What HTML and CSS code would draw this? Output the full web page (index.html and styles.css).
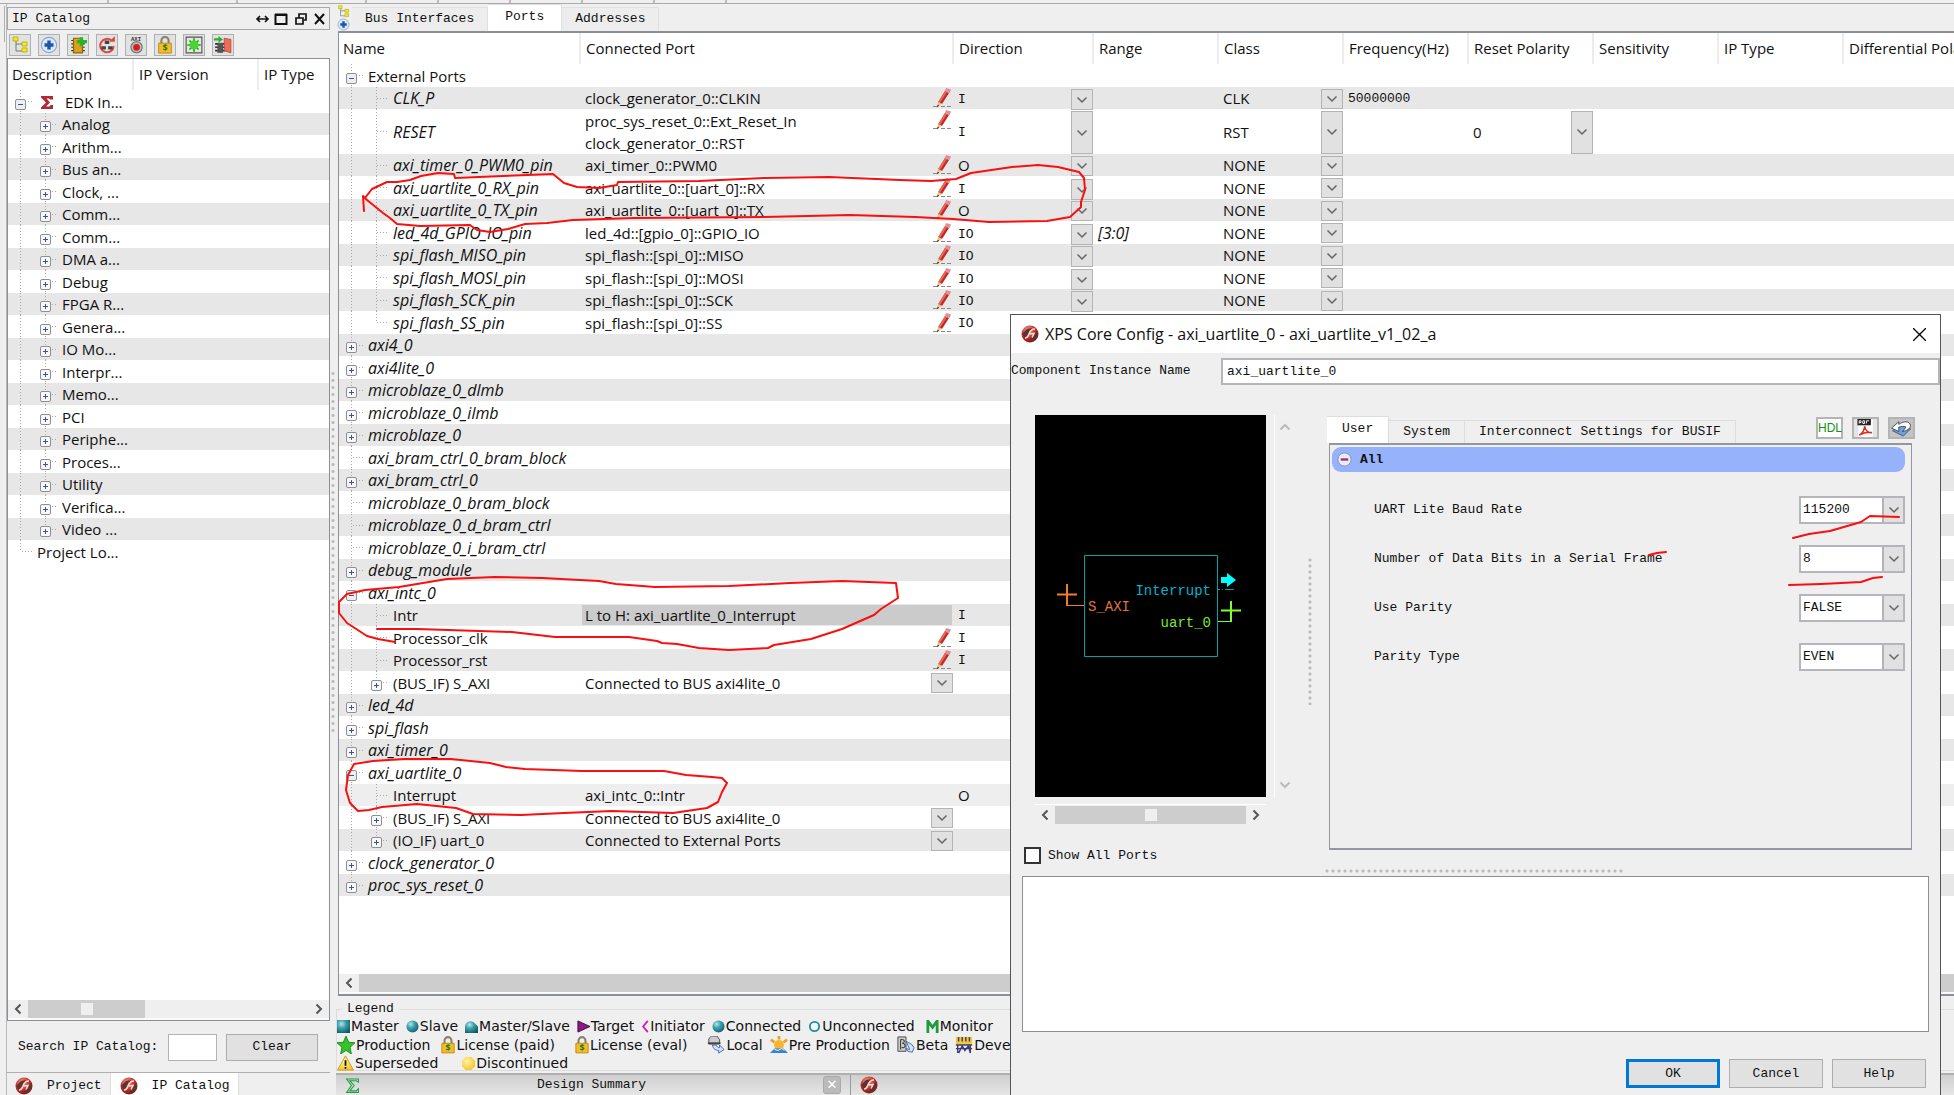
FILE: index.html
```html
<!DOCTYPE html>
<html lang="en">
<head>
<meta charset="utf-8">
<title>XPS - Ports</title>
<link rel="stylesheet" href="styles.css">
</head>
<body>
<svg class="defs" aria-hidden="true">
  <defs>
    <radialGradient id="teal" cx=".35" cy=".3" r=".8"><stop offset="0" stop-color="#b9e6ea"/><stop offset=".4" stop-color="#3fa3ad"/><stop offset="1" stop-color="#0c5963"/></radialGradient>
    <radialGradient id="red" cx=".4" cy=".3" r=".8"><stop offset="0" stop-color="#f7a090"/><stop offset=".5" stop-color="#c93028"/><stop offset="1" stop-color="#5d1512"/></radialGradient>
    <radialGradient id="yel" cx=".4" cy=".35" r=".8"><stop offset="0" stop-color="#fff3a0"/><stop offset="1" stop-color="#f3bd1c"/></radialGradient>
    <symbol id="pencil" viewBox="0 0 18 20"><path d="M0 18.500h5M8 18.500h4M14 18.500h4" stroke="#888" stroke-width="1"/><path d="M12 3l4 2-7 11-4-1.500z" fill="#c3282a"/><path d="M12 3l2 1-7 11-2-.7z" fill="#e36a55"/><path d="M13 0l5 1.500L16.500 5 12 3z" fill="#e58b96"/><path d="M5 14l4 1.800L4 19z" fill="#efc07a"/><path d="M4.800 16.800l1.400 1L3.800 19.300z" fill="#222"/></symbol>
    <symbol id="swirl" viewBox="0 0 18 18"><circle cx="9" cy="9" r="8.500" fill="url(#red)"/><path d="M1 9l5-5 5-1-3 5-4 5zM9 16l2-6 5-4 1 3-3 5z" fill="#5a3532"/><path d="M4 13c2 0 3-1 4-4s3-5 6-5M9 9l4-.500-2 4" stroke="#ffd9d2" stroke-width="1.600" fill="none"/></symbol>
    <symbol id="tree" viewBox="0 0 16 18"><path d="M4 4v11h6M4 8h7" stroke="#777" fill="none"/><path d="M1 1h5v4H1zM10 6h5v4h-5zM10 12h5v4h-5z" fill="#f2ec1c" stroke="#b5a900" stroke-width=".8"/></symbol>
    <symbol id="add" viewBox="0 0 16 16"><circle cx="8" cy="8" r="6.800" fill="#dbe9fa" stroke="#8aa6cc"/><path d="M8 4v8M4 8h8" stroke="#1d55ad" stroke-width="3"/></symbol>
    <symbol id="lock" viewBox="0 0 16 20"><path d="M4 9V5a4 4 0 0 1 8 0v3" fill="none" stroke="#8a8270" stroke-width="2.400"/><path d="M1 8h14v11H1z" fill="#f4bd26" stroke="#b98411"/><text x="8" y="17" class="lock-s">$</text></symbol>
  </defs>
</svg>

<div class="top-strip"><span></span><span></span><span></span><span></span><span></span><span></span><span></span><span></span></div>
<div class="workspace">
  <div class="left-edge"></div>
  <aside class="catalog">
    <header class="dock-title">
      <h2>IP Catalog</h2>
      <svg width="72" height="16" viewBox="0 0 72 16" fill="none" stroke="#111" stroke-width="2"><path d="M3 8h9M5 5L2 8l3 3M10 5l3 3-3 3" stroke-width="1.600"/><path d="M20.500 4h11v9h-11zM20 3.500h12"/><path d="M44 7V3h7v6h-2M41 7h7v6h-7z" stroke-width="1.700"/><path d="M60 3l9 10M69 3l-9 10"/></svg>
    </header>
    <div class="tools">
      <button aria-label="Tree"><svg><use href="#tree"/></svg></button>
      <button aria-label="Add"><svg><use href="#add"/></svg></button>
      <button aria-label="Add chip"><svg viewBox="0 0 16 16"><path d="M2 4h12M2 7h12M2 10h12M2 13h12" stroke="#333"/><path d="M4 2h8v13H4z" fill="#d9a21b" stroke="#8c6300"/><path d="M11 1v8M7 5h9" stroke="#28b32d" stroke-width="3"/></svg></button>
      <button aria-label="Refresh"><svg viewBox="0 0 16 16"><path d="M14 9a6 6 0 1 1-2-5" fill="none" stroke="#de4840" stroke-width="1.800"/><path d="M10 5h5V0z" fill="#de4840"/><path d="M6 4h4v3H6zM3 9h4v3H3zM9 9h4v3H9z" fill="#444"/></svg></button>
      <button aria-label="Record AXI"><svg viewBox="0 0 16 16"><text x="8" y="4" class="axi">AXI</text><circle cx="8.500" cy="10" r="5" fill="#bbb" stroke="#777"/><circle cx="8.500" cy="10" r="3" fill="#d81c1c"/></svg></button>
      <button aria-label="License"><svg><use href="#lock"/></svg></button>
      <button aria-label="Chip"><svg viewBox="0 0 16 16"><path d="M1 1h14v14H1z" fill="#dce9dc" stroke="#555"/><path d="M8 2v12M2 8h12M4 4l8 8M12 4l-8 8" stroke="#2c9b20" stroke-width="1.500"/><circle cx="8" cy="8" r="4" fill="#48d52f"/></svg></button>
      <button aria-label="Export"><svg viewBox="0 0 16 16"><path d="M1 7h9M1 10h9M1 13h9" stroke="#333" stroke-width="1.500"/><path d="M3 6h5v9H3z" fill="#555"/><path d="M9 2l6 1v12l-6-2z" fill="#ee6a5a" stroke="#b93024" stroke-width=".6"/><path d="M0 2h4V0l4 3-4 3V4H0z" fill="#28b032"/></svg></button>
    </div>
    <div class="tree-frame">
      <table class="grid tree">
        <colgroup><col class="c-desc"><col class="c-ver"><col></colgroup>
        <thead><tr><th>Description</th><th>IP Version</th><th>IP Type</th></tr></thead>
        <tbody>
          <tr><td class="n1"><button class="tg minus" aria-label="Collapse"></button><svg class="sig" viewBox="0 0 13 13"><path d="M0 0h12v3.500H9L8 2.500H5.500L9 6.500 5 10.500h3.500l1-1.500H12v4H0v-1.500L5 6.500 0 1.500z" fill="#b02a35"/></svg>EDK In...</td><td></td><td></td></tr>
          <tr><td class="n2"><button class="tg" aria-label="Expand"></button>Analog</td><td></td><td></td></tr>
          <tr><td class="n2"><button class="tg" aria-label="Expand"></button>Arithm...</td><td></td><td></td></tr>
          <tr><td class="n2"><button class="tg" aria-label="Expand"></button>Bus an...</td><td></td><td></td></tr>
          <tr><td class="n2"><button class="tg" aria-label="Expand"></button>Clock, ...</td><td></td><td></td></tr>
          <tr><td class="n2"><button class="tg" aria-label="Expand"></button>Comm...</td><td></td><td></td></tr>
          <tr><td class="n2"><button class="tg" aria-label="Expand"></button>Comm...</td><td></td><td></td></tr>
          <tr><td class="n2"><button class="tg" aria-label="Expand"></button>DMA a...</td><td></td><td></td></tr>
          <tr><td class="n2"><button class="tg" aria-label="Expand"></button>Debug</td><td></td><td></td></tr>
          <tr><td class="n2"><button class="tg" aria-label="Expand"></button>FPGA R...</td><td></td><td></td></tr>
          <tr><td class="n2"><button class="tg" aria-label="Expand"></button>Genera...</td><td></td><td></td></tr>
          <tr><td class="n2"><button class="tg" aria-label="Expand"></button>IO Mo...</td><td></td><td></td></tr>
          <tr><td class="n2"><button class="tg" aria-label="Expand"></button>Interpr...</td><td></td><td></td></tr>
          <tr><td class="n2"><button class="tg" aria-label="Expand"></button>Memo...</td><td></td><td></td></tr>
          <tr><td class="n2"><button class="tg" aria-label="Expand"></button>PCI</td><td></td><td></td></tr>
          <tr><td class="n2"><button class="tg" aria-label="Expand"></button>Periphe...</td><td></td><td></td></tr>
          <tr><td class="n2"><button class="tg" aria-label="Expand"></button>Proces...</td><td></td><td></td></tr>
          <tr><td class="n2"><button class="tg" aria-label="Expand"></button>Utility</td><td></td><td></td></tr>
          <tr><td class="n2"><button class="tg" aria-label="Expand"></button>Verifica...</td><td></td><td></td></tr>
          <tr><td class="n2 last"><button class="tg" aria-label="Expand"></button>Video ...</td><td></td><td></td></tr>
          <tr><td class="n1 leaf last">Project Lo...</td><td></td><td></td></tr>
        </tbody>
      </table>
      <div class="hbar"><svg class="arr" viewBox="0 0 8 12"><path d="M6.500 1.500L2 6l4.500 4.500"/></svg><div class="thumb short"><i></i></div><svg class="arr end" viewBox="0 0 8 12"><path d="M1.500 1.500L6 6l-4.500 4.500"/></svg></div>
    </div>
    <form class="search"><label for="q">Search IP Catalog:</label><input id="q" type="text"><button type="button">Clear</button></form>
    <nav class="dock-tabs"><button><svg><use href="#swirl"/></svg>Project</button><button class="on"><svg><use href="#swirl"/></svg>IP Catalog</button></nav>
  </aside>
  <div class="split-v"></div>
  <main class="ports">
    <nav class="tabs"><span class="tab-icons"><svg><use href="#tree"/></svg><svg><use href="#add"/></svg></span><button>Bus Interfaces</button><button class="on">Ports</button><button>Addresses</button></nav>
    <div class="ports-frame">
      <table class="grid">
        <colgroup><col class="c-name"><col class="c-port"><col class="c-dir"><col class="c-std"><col class="c-std"><col class="c-std"><col class="c-std"><col class="c-std"><col class="c-std"><col></colgroup>
        <thead><tr><th>Name</th><th>Connected Port</th><th>Direction</th><th>Range</th><th>Class</th><th>Frequency(Hz)</th><th>Reset Polarity</th><th>Sensitivity</th><th>IP Type</th><th>Differential Polarity</th></tr></thead>
        <tbody>
          <tr><td class="n1"><button class="tg minus" aria-label="Collapse"></button>External Ports</td><td colspan="9"></td></tr>
          <tr><td class="n2 leaf em">CLK_P</td><td><div class="pc">clock_generator_0::CLKIN<svg><use href="#pencil"/></svg></div></td><td class="mono"><div class="combo"><select aria-label="Direction"><option>I</option></select></div></td><td></td><td><div class="combo"><select aria-label="Class"><option>CLK</option></select></div></td><td class="mono">50000000</td><td colspan="4"></td></tr>
          <tr class="tall"><td class="n2 leaf em">RESET</td><td><div class="pc">proc_sys_reset_0::Ext_Reset_In<br>clock_generator_0::RST<svg><use href="#pencil"/></svg></div></td><td class="mono"><div class="combo"><select aria-label="Direction"><option>I</option></select></div></td><td></td><td><div class="combo"><select aria-label="Class"><option>RST</option></select></div></td><td></td><td><div class="combo"><select aria-label="Reset polarity"><option>0</option></select></div></td><td colspan="3"></td></tr>
          <tr><td class="n2 leaf em">axi_timer_0_PWM0_pin</td><td><div class="pc">axi_timer_0::PWM0<svg><use href="#pencil"/></svg></div></td><td><div class="combo"><select aria-label="Direction"><option>O</option></select></div></td><td></td><td><div class="combo"><select aria-label="Class"><option>NONE</option></select></div></td><td colspan="5"></td></tr>
          <tr><td class="n2 leaf em">axi_uartlite_0_RX_pin</td><td><div class="pc">axi_uartlite_0::[uart_0]::RX<svg><use href="#pencil"/></svg></div></td><td class="mono"><div class="combo"><select aria-label="Direction"><option>I</option></select></div></td><td></td><td><div class="combo"><select aria-label="Class"><option>NONE</option></select></div></td><td colspan="5"></td></tr>
          <tr><td class="n2 leaf em">axi_uartlite_0_TX_pin</td><td><div class="pc">axi_uartlite_0::[uart_0]::TX<svg><use href="#pencil"/></svg></div></td><td><div class="combo"><select aria-label="Direction"><option>O</option></select></div></td><td></td><td><div class="combo"><select aria-label="Class"><option>NONE</option></select></div></td><td colspan="5"></td></tr>
          <tr><td class="n2 leaf em">led_4d_GPIO_IO_pin</td><td><div class="pc">led_4d::[gpio_0]::GPIO_IO<svg><use href="#pencil"/></svg></div></td><td class="mono"><div class="combo"><select aria-label="Direction"><option>IO</option></select></div></td><td class="em">[3:0]</td><td><div class="combo"><select aria-label="Class"><option>NONE</option></select></div></td><td colspan="5"></td></tr>
          <tr><td class="n2 leaf em">spi_flash_MISO_pin</td><td><div class="pc">spi_flash::[spi_0]::MISO<svg><use href="#pencil"/></svg></div></td><td class="mono"><div class="combo"><select aria-label="Direction"><option>IO</option></select></div></td><td></td><td><div class="combo"><select aria-label="Class"><option>NONE</option></select></div></td><td colspan="5"></td></tr>
          <tr><td class="n2 leaf em">spi_flash_MOSI_pin</td><td><div class="pc">spi_flash::[spi_0]::MOSI<svg><use href="#pencil"/></svg></div></td><td class="mono"><div class="combo"><select aria-label="Direction"><option>IO</option></select></div></td><td></td><td><div class="combo"><select aria-label="Class"><option>NONE</option></select></div></td><td colspan="5"></td></tr>
          <tr><td class="n2 leaf em">spi_flash_SCK_pin</td><td><div class="pc">spi_flash::[spi_0]::SCK<svg><use href="#pencil"/></svg></div></td><td class="mono"><div class="combo"><select aria-label="Direction"><option>IO</option></select></div></td><td></td><td><div class="combo"><select aria-label="Class"><option>NONE</option></select></div></td><td colspan="5"></td></tr>
          <tr><td class="n2 leaf last em">spi_flash_SS_pin</td><td><div class="pc">spi_flash::[spi_0]::SS<svg><use href="#pencil"/></svg></div></td><td class="mono">IO</td><td colspan="7"></td></tr>
          <tr><td class="n1 em"><button class="tg" aria-label="Expand"></button>axi4_0</td><td colspan="9"></td></tr>
          <tr><td class="n1 em"><button class="tg" aria-label="Expand"></button>axi4lite_0</td><td colspan="9"></td></tr>
          <tr><td class="n1 em"><button class="tg" aria-label="Expand"></button>microblaze_0_dlmb</td><td colspan="9"></td></tr>
          <tr><td class="n1 em"><button class="tg" aria-label="Expand"></button>microblaze_0_ilmb</td><td colspan="9"></td></tr>
          <tr><td class="n1 em"><button class="tg" aria-label="Expand"></button>microblaze_0</td><td colspan="9"></td></tr>
          <tr><td class="n1 leaf em">axi_bram_ctrl_0_bram_block</td><td colspan="9"></td></tr>
          <tr><td class="n1 em"><button class="tg" aria-label="Expand"></button>axi_bram_ctrl_0</td><td colspan="9"></td></tr>
          <tr><td class="n1 leaf em">microblaze_0_bram_block</td><td colspan="9"></td></tr>
          <tr><td class="n1 leaf em">microblaze_0_d_bram_ctrl</td><td colspan="9"></td></tr>
          <tr><td class="n1 leaf em">microblaze_0_i_bram_ctrl</td><td colspan="9"></td></tr>
          <tr><td class="n1 em"><button class="tg" aria-label="Expand"></button>debug_module</td><td colspan="9"></td></tr>
          <tr><td class="n1 em"><button class="tg minus" aria-label="Collapse"></button>axi_intc_0</td><td colspan="9"></td></tr>
          <tr><td class="n2 leaf">Intr</td><td class="picked">L to H: axi_uartlite_0_Interrupt</td><td class="mono">I</td><td colspan="7"></td></tr>
          <tr><td class="n2 leaf">Processor_clk</td><td><div class="pc"><svg><use href="#pencil"/></svg></div></td><td class="mono">I</td><td colspan="7"></td></tr>
          <tr><td class="n2 leaf">Processor_rst</td><td><div class="pc"><svg><use href="#pencil"/></svg></div></td><td class="mono">I</td><td colspan="7"></td></tr>
          <tr><td class="n2 last"><button class="tg" aria-label="Expand"></button>(BUS_IF) S_AXI</td><td><div class="combo"><select aria-label="Bus"><option>Connected to BUS axi4lite_0</option></select></div></td><td colspan="8"></td></tr>
          <tr><td class="n1 em"><button class="tg" aria-label="Expand"></button>led_4d</td><td colspan="9"></td></tr>
          <tr><td class="n1 em"><button class="tg" aria-label="Expand"></button>spi_flash</td><td colspan="9"></td></tr>
          <tr><td class="n1 em"><button class="tg" aria-label="Expand"></button>axi_timer_0</td><td colspan="9"></td></tr>
          <tr><td class="n1 em"><button class="tg minus" aria-label="Collapse"></button>axi_uartlite_0</td><td colspan="9"></td></tr>
          <tr class="hover"><td class="n2 leaf">Interrupt</td><td>axi_intc_0::Intr</td><td>O</td><td colspan="7"></td></tr>
          <tr><td class="n2"><button class="tg" aria-label="Expand"></button>(BUS_IF) S_AXI</td><td><div class="combo"><select aria-label="Bus"><option>Connected to BUS axi4lite_0</option></select></div></td><td colspan="8"></td></tr>
          <tr><td class="n2 last"><button class="tg" aria-label="Expand"></button>(IO_IF) uart_0</td><td><div class="combo"><select aria-label="IO"><option>Connected to External Ports</option></select></div></td><td colspan="8"></td></tr>
          <tr><td class="n1 em"><button class="tg" aria-label="Expand"></button>clock_generator_0</td><td colspan="9"></td></tr>
          <tr><td class="n1 last em"><button class="tg" aria-label="Expand"></button>proc_sys_reset_0</td><td colspan="9"></td></tr>
        </tbody>
      </table>
      <div class="hbar"><svg class="arr" viewBox="0 0 8 12"><path d="M6.500 1.500L2 6l4.500 4.500"/></svg><div class="thumb"></div></div>
    </div>
    <fieldset class="legend">
      <legend>Legend</legend>
      <div class="lrow">
        <span><svg viewBox="0 0 14 14"><path d="M0 0h14v14H0z" fill="url(#teal)"/></svg>Master</span>
        <span><svg viewBox="0 0 14 14"><circle cx="7" cy="7" r="6.500" fill="url(#teal)"/></svg>Slave</span>
        <span><svg viewBox="0 0 14 14"><path d="M0 14V7a6 6 0 0 1 11-3l3 3v7z" fill="url(#teal)"/></svg>Master/Slave</span>
        <span><svg viewBox="0 0 14 14"><path d="M1 1l13 6-13 6z" fill="#8b1a86" stroke="#3d0d3b"/></svg>Target</span>
        <span><svg class="thin" viewBox="0 0 8 14"><path d="M7 1L2 7l5 6" fill="none" stroke="#c426b2" stroke-width="2"/></svg>Initiator</span>
        <span><svg viewBox="0 0 14 14"><circle cx="7" cy="7" r="6.500" fill="url(#teal)"/></svg>Connected</span>
        <span><svg viewBox="0 0 14 14"><circle cx="7" cy="7" r="5" fill="#eff" stroke="#2b8c96" stroke-width="2"/></svg>Unconnected</span>
        <span class="mon"><svg viewBox="0 0 14 14"><path d="M2 14V1l5 7 5-7v13" fill="none" stroke="#1f9a3c" stroke-width="3"/></svg>Monitor</span>
      </div>
      <div class="lrow wide">
        <span><svg viewBox="0 0 20 20"><path d="M10 0l3 7 7 .5-5.500 5L16 20l-6-4-6 4 1.500-7.500L0 7.500 7 7z" fill="#35c32b" stroke="#178a14"/></svg>Production</span>
        <span class="paid"><svg class="lk"><use href="#lock"/></svg>License (paid)</span>
        <span class="eval"><svg class="lk"><use href="#lock"/></svg>License (eval)</span>
        <span class="local"><svg viewBox="0 0 20 20"><path d="M2 8V3l3-3h6l3 4v5H2z" fill="#ccc" stroke="#444"/><path d="M1 8h14" stroke="#444" stroke-width="2"/><path d="M6 10c1 5 4 6 7 6v3l6-4-5-5v3c-2 0-3-1-4-3z" fill="#d2e4fb" stroke="#3a62a8"/></svg>Local</span>
        <span><svg viewBox="0 0 20 20"><path d="M10 0v4M1 4l4 3M19 4l-4 3" stroke="#f0a020" stroke-width="3"/><circle cx="10" cy="10" r="5.500" fill="#f5b52e"/><path d="M0 19l5-5h10l5 5z" fill="#3784d6"/><path d="M5 15l4 1 4-2 3 2" stroke="#fff" fill="none"/></svg>Pre Production</span>
        <span><svg viewBox="0 0 20 20"><path d="M1 1h9v16H1z" fill="#ccc" stroke="#444"/><path d="M4 15V4h2q3 0 2 3-1 1-2 1 3 0 3 3t-4 2" stroke="#222" fill="none"/><path d="M10 6l6 3 3 4-2 5-5-1-2-3 4 1-2-5z" fill="#d2e4fb" stroke="#3a62a8"/></svg>Beta</span>
        <span><svg viewBox="0 0 20 20"><path d="M1 1h18v9H1z" fill="#f1c93b"/><path d="M4 1v5M8 1v5M12 1v5M16 1v5M1 10h18M3 10v9M17 10v9M1 14h18M4 19l4-8 3 5 4-5 2 8" stroke="#3c3c78" stroke-width="1.600" fill="none"/></svg>Development</span>
      </div>
      <div class="lrow">
        <span class="sup"><svg viewBox="0 0 18 18"><path d="M9 1l9 16H0z" fill="url(#yel)" stroke="#c79a12"/><path d="M9 6v6M9 13.500v2" stroke="#111" stroke-width="2"/></svg>Superseded</span>
        <span class="disc"><svg viewBox="0 0 14 14"><path d="M4 0h6l4 4v6l-4 4H4l-4-4V4z" fill="url(#yel)"/></svg>Discontinued</span>
      </div>
    </fieldset>
    <nav class="doc-tabs">
      <div class="doc"><svg class="sum" viewBox="0 0 13 14"><path d="M1 1h11v3L10 2.500H4L8 7l-4 5h6l2-2v3.500H1L5.500 7z" fill="#bfe8c8" stroke="#249a45"/></svg><button>Design Summary</button><button class="x" aria-label="Close tab">✕</button></div>
      <div class="doc rest"><svg class="sw"><use href="#swirl"/></svg></div>
    </nav>
  </main>
</div>

<section class="dialog" role="dialog" aria-label="XPS Core Config">
  <header><svg class="sw"><use href="#swirl"/></svg><h1>XPS Core Config - axi_uartlite_0 - axi_uartlite_v1_02_a</h1><button aria-label="Close"><svg viewBox="0 0 12 12"><path d="M0 0l12 12M12 0L0 12" stroke="#000" stroke-width="1.200"/></svg></button></header>
  <div class="inst"><label for="inst">Component Instance Name</label><input id="inst" type="text" value="axi_uartlite_0"></div>
  <div class="cfg">
    <div class="preview">
      <div class="view">
        <svg class="block" viewBox="0 0 231 382">
          <path d="M49.500 140.500h133v101h-133z" fill="none" stroke="#00a3a8"/>
          <path d="M22 179.500h20M32 169v21" fill="none" stroke="#f47a2c" stroke-width="2"/>
          <path d="M31 190.500h18" stroke="#f47a2c"/>
          <text x="53" y="196" fill="#e0743a">S_AXI</text>
          <text x="176" y="180" fill="#00b4d0" text-anchor="end">Interrupt</text>
          <text x="176" y="212" fill="#7de82c" text-anchor="end">uart_0</text>
          <path d="M186 162h6v-4l9 7-9 7v-4h-6z" fill="#0ff"/>
          <path d="M183 174.500h16" stroke="#00a3a8" stroke-dasharray="2 2 1 2 9"/>
          <path d="M186 195.500h20M196 186v21" fill="none" stroke="#7dff2c" stroke-width="2"/>
          <path d="M183 206.500h14" stroke="#7dff2c"/>
        </svg>
        <div class="vbar"><svg viewBox="0 0 12 8"><path d="M1.500 6.500L6 2l4.500 4.500"/></svg><svg viewBox="0 0 12 8"><path d="M1.500 1.500L6 6l4.500-4.500"/></svg></div>
        <div class="dots-v"></div>
      </div>
      <div class="hbar small"><svg class="arr" viewBox="0 0 8 12"><path d="M6.500 1.500L2 6l4.500 4.500"/></svg><div class="thumb"><i></i></div><svg class="arr" viewBox="0 0 8 12"><path d="M1.500 1.500L6 6l-4.500 4.500"/></svg></div>
      <label class="check"><input type="checkbox">Show All Ports</label>
    </div>
    <div class="params">
      <nav class="ptabs"><button class="on">User</button><button>System</button><button>Interconnect Settings for BUSIF</button>
        <span class="acts"><button class="hdl">HDL</button><button aria-label="PDF"><svg viewBox="0 0 20 20"><path d="M2 0h16v20H2z" fill="#fff"/><path d="M1 0h15v7H1z" fill="#222"/><path d="M3 5V2h2v2H3M7 2v3h2V2zM11 5V2h3" stroke="#fff" fill="none"/><path d="M3 18c4-2 6-7 6-10 1 5 4 8 8 7-5-1-9 0-14 3z" fill="none" stroke="#de2a1c" stroke-width="1.600"/></svg></button><button class="back" aria-label="Reset"><svg viewBox="0 0 24 20"><path d="M2 13l9-6 11 4-8 8z" fill="#6fa1dc" stroke="#456"/><path d="M1 10l8-7v3c5-4 12-4 13 1 0 4-4 6-9 7l4-5c-2-1-5-1-8 0v5z" fill="#fff" stroke="#345"/></svg></button></span>
      </nav>
      <div class="pframe">
        <h3><svg viewBox="0 0 16 16"><circle cx="8" cy="8" r="7" fill="#e4eefb" stroke="#8a93a5"/><path d="M4 8h8" stroke="#b5285c" stroke-width="2.500"/></svg>All</h3>
        <div class="field"><label for="baud">UART Lite Baud Rate</label><div class="combo box"><select id="baud"><option>115200</option></select></div></div>
        <div class="field"><label for="bits">Number of Data Bits in a Serial Frame</label><div class="combo box"><select id="bits"><option>8</option></select></div></div>
        <div class="field"><label for="par">Use Parity</label><div class="combo box"><select id="par"><option>FALSE</option></select></div></div>
        <div class="field"><label for="ptype">Parity Type</label><div class="combo box"><select id="ptype"><option>EVEN</option></select></div></div>
      </div>
    </div>
  </div>
  <div class="dots-h"></div>
  <textarea aria-label="Messages" readonly></textarea>
  <footer><button class="primary">OK</button><button>Cancel</button><button>Help</button></footer>
</section>

<svg class="ink" width="1954" height="1095" viewBox="0 0 1954 1095" aria-hidden="true">
  <path d="M364 211L363 196 367 200 383 213 390 218 397 224 420 226 470 225 477 230 490 232 508 229 525 224 547 223 573 220 634 218 764 217 850 215 915 217 953 219 989 222 1047 221 1070 217 1081 207V202L1085 190 1084 178 1079 172 1058 167 1038 165 1012 167 971 173 956 179 931 181 900 180 829 177 764 178 699 181 618 182 617 185 599 188 577 187 564 183 553 174 503 176 455 178 454 174 438 173 421 176 410 180 397 182 387 182 372 189 365 198"/>
  <path d="M377 629H417L512 632 555 637 629 637 657 641 662 643 677 644 699 648 729 650 768 648 774 645 811 639 842 629 874 615 881 609 898 598 896 583 842 581 790 583 729 586 655 587 616 584 599 581 542 578 495 577 447 579 399 587 365 590 347 594 339 602V613L347 623 367 636 378 639 395 642"/>
  <path d="M354 764L373 761 404 759 451 759 490 763 506 767 525 769 582 771 664 771 686 775 712 777 722 778 727 783 722 792 718 802 707 808 673 813 612 811 564 813 521 815 473 814 456 808 417 804 382 807 369 810 358 811 350 803 346 790 348 775z"/>
  <path d="M1793 538L1809 534 1830 531 1861 522 1870 516 1899 517M1649 555L1657 553 1666 552M1789 585L1821 584 1861 582 1873 578 1882 577"/>
</svg>
</body>
</html>
```
FILE: styles.css
```css
* { box-sizing: border-box; }
:root {
  --mono: "Liberation Mono", monospace;
  --ui: "Open Sans", "Noto Sans", sans-serif;
  --face: #efefef;
  --line: #a0a3a8;
}
body {
  margin: 0;
  height: 100vh;
  overflow: hidden;
  display: flex;
  flex-direction: column;
  background: var(--face);
  color: #111;
  font: 13px/16px var(--mono);
}
button, input, select, textarea { font: inherit; color: inherit; margin: 0; }
h1, h2, h3 { margin: 0; font: inherit; }
.defs { position: absolute; width: 0; height: 0; }
.lock-s { font: bold 10px var(--ui); fill: #1d7a1d; text-anchor: middle; }
.axi { font: bold 5px var(--mono); fill: #333; text-anchor: middle; }

.top-strip { flex: none; height: 4px; border-bottom: 1px solid #aaa; display: flex; }
.top-strip span { width: 72px; border-right: 2px solid #bbb; }
.top-strip span:first-child { width: 109px; }
.top-strip span:nth-child(2), .top-strip span:nth-child(3) { width: 129px; }
.workspace { flex: 1; min-height: 0; display: flex; }
.left-edge { width: 7px; border-right: 1px solid #b8b8b8; background: linear-gradient(#b0b0b0, #b0b0b0) 4px 2px / 1px 36px no-repeat; }

/* IP catalog dock */
.catalog { width: 323px; display: flex; flex-direction: column; }
.dock-title { height: 23px; margin-top: 3px; padding: 0 2px 0 4px; display: flex; align-items: center; justify-content: space-between; border: 1px solid #a8a8a8; }
.tools { display: flex; gap: 7px; padding: 4px 2px 2px; }
.tools button { width: 22px; height: 22px; padding: 1px; border: 1px solid #b0b0b0; background: #e2e2e2; }
.tools svg { display: block; width: 18px; height: 18px; }
.tree-frame, .ports-frame { flex: 1; min-height: 0; display: flex; flex-direction: column; justify-content: space-between; background: #fff; border: 1px solid #8b9097; }
.hbar { height: 20px; background: #efefef; display: flex; align-items: center; border-bottom: 2px solid #fafafa; }
.arr { width: 8px; height: 12px; margin: 0 6px; }
.arr path, .vbar path { fill: none; stroke: #555; stroke-width: 2; }
.arr.end { margin-left: auto; }
.thumb { flex: 1; height: 18px; background: #cdcdcd; display: flex; align-items: center; justify-content: center; }
.thumb.short { flex: none; width: 117px; }
.thumb i { width: 12px; height: 12px; background: #efefef; }
.search { display: flex; align-items: center; height: 51px; padding: 1px 12px 0 11px; }
.search input { width: 49px; height: 27px; margin-left: auto; border: 1px solid #b0b3ba; background: #fff; }
.search button { width: 92px; height: 27px; margin-left: 9px; border: 1px solid #adadad; background: #e1e1e1; }
.dock-tabs { display: flex; height: 23px; border-top: 1px solid #b0b0b0; padding-left: 3px; }
.dock-tabs button { display: flex; align-items: center; gap: 14px; padding: 4px 8px 0 5px; border: 0; border-right: 1px solid #ddd; background: transparent; }
.dock-tabs button.on { background: #fff; padding-left: 9px; }
.dock-tabs svg, .sw { width: 18px; height: 18px; }
.split-v { width: 6px; background: radial-gradient(circle, #bbb 1px, transparent 2px) 0 0 / 6px 7px content-box; padding: 366px 0 360px; }

/* tables */
.grid { width: 100%; table-layout: fixed; border-collapse: collapse; font: 15px/20px var(--ui); }
.grid th { height: 31px; padding: 0 0 2px 5px; text-align: left; font-weight: normal; border-left: 2px solid #ececec; white-space: nowrap; overflow: hidden; }
.grid th:first-child { border-left: 0; padding-left: 4px; }
.grid td { height: 23px; padding: 0 0 0 5px; white-space: nowrap; vertical-align: middle; }
.grid tr:nth-child(even) td { height: 22px; }
.grid tr:nth-child(even) { background: #e7e7e7; }
.grid tr.hover { background: #eee; }
.grid tr.tall td { height: 45px; line-height: 22px; }
.grid .mono { font: 13px/20px var(--mono); vertical-align: bottom; }
.grid .em { font-size: 16px; font-style: italic; }
.c-desc, .c-ver { width: 125px; }
.c-name { width: 241px; }
.c-port { width: 373px; }
.c-dir { width: 140px; }
.c-std { width: 125px; }
.grid .picked { background: linear-gradient(#cbcbcb, #cbcbcb) 2px 1px / calc(100% - 3px) 20px no-repeat; }
.grid td.n1, .grid td.n2 {
  --v: repeating-linear-gradient(#aaa 0 1px, transparent 1px 3px);
  --h: repeating-linear-gradient(90deg, #aaa 0 1px, transparent 1px 3px);
  background: var(--v) 12px 0 / 1px 100% no-repeat, var(--h) 14px 50% / 11px 1px no-repeat;
}
.grid td.n2 { background: var(--v) 12px 0 / 1px 100% no-repeat, var(--v) 37px 0 / 1px 100% no-repeat, var(--h) 38px 50% / 11px 1px no-repeat; }
.grid td.n1.last { background: var(--v) 12px 0 / 1px 50% no-repeat, var(--h) 14px 50% / 11px 1px no-repeat; }
.grid td.n2.last { background: var(--v) 12px 0 / 1px 100% no-repeat, var(--v) 37px 0 / 1px 50% no-repeat, var(--h) 38px 50% / 11px 1px no-repeat; }
.grid td.n1 { padding-left: 7px; }
.grid td.n1.leaf { padding-left: 29px; }
.grid td.n2 { padding-left: 32px; }
.grid td.n2.leaf { padding-left: 54px; }
.tg { width: 11px; height: 11px; margin-right: 11px; padding: 0; vertical-align: -1px; border: 1px solid #8f8f8f; border-radius: 2px; background: linear-gradient(#35569c, #35569c) center / 5px 1px no-repeat, linear-gradient(#35569c, #35569c) center / 1px 5px no-repeat, #f8f8f8; }
.tg.minus { background: linear-gradient(#35569c, #35569c) center / 5px 1px no-repeat, #eee; }
.tree .sig { width: 13px; height: 13px; margin: 0 11px 0 4px; vertical-align: -1px; }
.pc { display: grid; grid-template-columns: 1fr 20px; }
.pc svg { grid-area: 1 / 2; width: 18px; height: 20px; }

.combo { display: grid; height: 21px; }
.tall .combo { height: 44px; }
.combo select { grid-area: 1 / 1; min-width: 0; padding: 0; border: 0; background: transparent; appearance: none; outline: 0; }
.grid .mono select { padding-top: 2px; }
.combo::after {
  content: "";
  grid-area: 1 / 1;
  justify-self: end;
  width: 20px;
  margin-top: 1px;
  border: 1px solid #b4b4b4;
  background: #e1e1e1 url("data:image/svg+xml,%3Csvg xmlns='http://www.w3.org/2000/svg' width='12' height='8'%3E%3Cpath d='M1.500 1.500L6 6l4.500-4.500' fill='none' stroke='%23666' stroke-width='1.500'/%3E%3C/svg%3E") center no-repeat;
  pointer-events: none;
}

/* ports view */
.ports { flex: 1; min-width: 0; display: flex; flex-direction: column; }
.tabs { height: 27px; display: flex; align-items: flex-end; }
.tab-icons { width: 16px; display: flex; flex-direction: column; }
.tab-icons svg { width: 15px; height: 13px; }
.tabs button { height: 24px; padding: 0 13px 2px; border: 1px solid #e0e0e0; border-width: 1px 1px 0 0; background: #ededed; }
.tabs button.on { height: 27px; padding-inline: 17px; background: #fff; }
.ports-frame { margin-left: 2px; border-width: 2px 0 2px 1px; }
.legend { height: 70px; margin: 5px 0 0; padding: 0; border: 1px solid #ddd; border-width: 1px 0 1px 1px; }
.legend legend { padding: 0 5px; margin-left: 5px; }
.lrow { display: flex; align-items: center; gap: 7px; height: 18px; font: 14px/18px "DejaVu Sans", sans-serif; white-space: nowrap; }
.lrow span { display: flex; align-items: center; gap: 1px; }
.lrow svg { width: 13px; height: 13px; }
.lrow svg.thin { width: 8px; }
.lrow.wide { height: 19px; }
.wide svg { width: 18px; height: 18px; }
.wide svg.lk { width: 14px; }
.mon { padding-left: 4px; }
.paid { padding-left: 4px; }
.eval, .local { padding-left: 13px; }
.sup svg { width: 17px; height: 16px; }
.disc { padding-left: 17px; }
.doc-tabs { display: flex; height: 22px; margin-top: 2px; border-top: 2px solid #b0b0b0; background: linear-gradient(#cfcfcf, #e6e6e6); }
.doc { width: 515px; display: flex; align-items: center; padding: 0 9px; border-right: 1px solid #999; }
.doc.rest { flex: 1; border: 0; }
.doc button { flex: 1; padding: 0; border: 0; background: transparent; }
.doc button.x { flex: none; width: 18px; height: 18px; border: 1px solid #aaa; border-radius: 3px; background: #bbb; color: #fff; font: bold 13px/14px "DejaVu Sans", sans-serif; }
.sum { width: 15px; height: 15px; }

/* core config dialog */
.dialog { position: absolute; left: 1010px; right: 13px; top: 314px; bottom: 0; display: flex; flex-direction: column; background: var(--face); border: 1px solid #555; border-bottom: 0; }
.dialog header { height: 38px; padding: 0 14px 0 10px; display: flex; align-items: center; gap: 6px; background: #fff; font: 16px/20px var(--ui); }
.dialog header button { margin-left: auto; padding: 0; border: 0; background: transparent; }
.dialog header button svg { display: block; width: 13px; height: 13px; }
.inst { height: 36px; display: flex; align-items: center; }
.inst label { width: 210px; }
.inst input { flex: 1; height: 27px; padding: 0 4px; border: 2px solid #b4b6bb; background: #fff; outline: 0; }
.cfg { display: grid; grid-template-columns: 292px 1fr; align-items: start; padding: 26px 27px 0 24px; }
.view { display: grid; grid-template-columns: 231px 8px 20px 1fr; }
.block { width: 231px; height: 382px; background: #000; }
.block text { font: 14px var(--mono); }
.vbar { grid-column: 3; padding: 8px 4px; border-left: 1px solid #fff; display: flex; flex-direction: column; justify-content: space-between; }
.vbar svg { width: 12px; height: 8px; }
.vbar path { stroke: #bbb; }
.dots-v { width: 4px; height: 148px; margin: 142px 0 0 14px; background: radial-gradient(circle, #bbb 1px, transparent 2px) 0 0 / 4px 6px; }
.hbar.small { width: 231px; margin-top: 7px; border-top: 1px solid #fff; border-bottom: 0; }
.check { display: flex; align-items: center; gap: 7px; margin: 23px 0 0 -11px; }
.check input { width: 17px; height: 17px; appearance: none; border: 2px solid #333; background: #fff; }
.params { display: flex; flex-direction: column; height: 439px; }
.ptabs { display: flex; align-items: flex-end; height: 28px; }
.ptabs > button { height: 23px; padding: 0 14px; border: 1px solid #ddd; border-width: 1px 1px 0 0; background: transparent; white-space: nowrap; }
.ptabs > button.on { height: 27px; padding-bottom: 2px; padding-inline: 15px; background: #fff; }
.acts { display: flex; gap: 9px; margin: 0 -2px 4px auto; }
.acts button { width: 27px; height: 22px; padding: 0; border: 2px solid #b4b4b4; background: #e4e4e4; }
.acts svg { display: block; width: 23px; height: 18px; }
.acts .hdl { background: #fff; color: #149014; font: 12px/16px "Liberation Sans", sans-serif; }
.acts .back { background: #c4c4c4; }
.pframe { flex: 1; margin: 0 1px 4px 2px; padding: 2px 6px 0 2px; border: 2px solid #9297a0; border-width: 2px 1px 2px 1px; }
.pframe h3 { height: 25px; margin-bottom: 13px; padding-left: 5px; display: flex; align-items: center; gap: 8px; border-radius: 9px; background: #96b2fb; font-weight: bold; }
.pframe h3 svg { width: 15px; height: 15px; }
.field { display: flex; justify-content: space-between; align-items: center; height: 49px; padding-left: 42px; }
.combo.box { width: 106px; height: 28px; border: 2px solid #b4b6bb; background: #fff; }
.combo.box select { padding-left: 2px; }
.combo.box::after { width: 19px; margin: 0; border-width: 0 0 0 2px; }
.dots-h { width: 300px; height: 4px; margin: 5px 0 3px 313px; flex: none; background: radial-gradient(circle, #bbb 1px, transparent 2px) 0 0 / 6px 4px; }
.dialog textarea { flex: 1; margin: 0 11px; resize: none; border: 1px solid #8b9097; background: #fff; }
.dialog footer { display: flex; justify-content: flex-end; gap: 9px; padding: 27px 14px 7px; }
.dialog footer button { width: 94px; height: 29px; border: 1px solid #adadad; background: #e1e1e1; }
.dialog footer .primary { border: 3px solid #0078d7; }

/* freehand marks */
.ink { position: absolute; left: 0; top: 0; pointer-events: none; fill: none; stroke: #fa0f0f; stroke-width: 2; stroke-linejoin: round; stroke-linecap: round; }
```
